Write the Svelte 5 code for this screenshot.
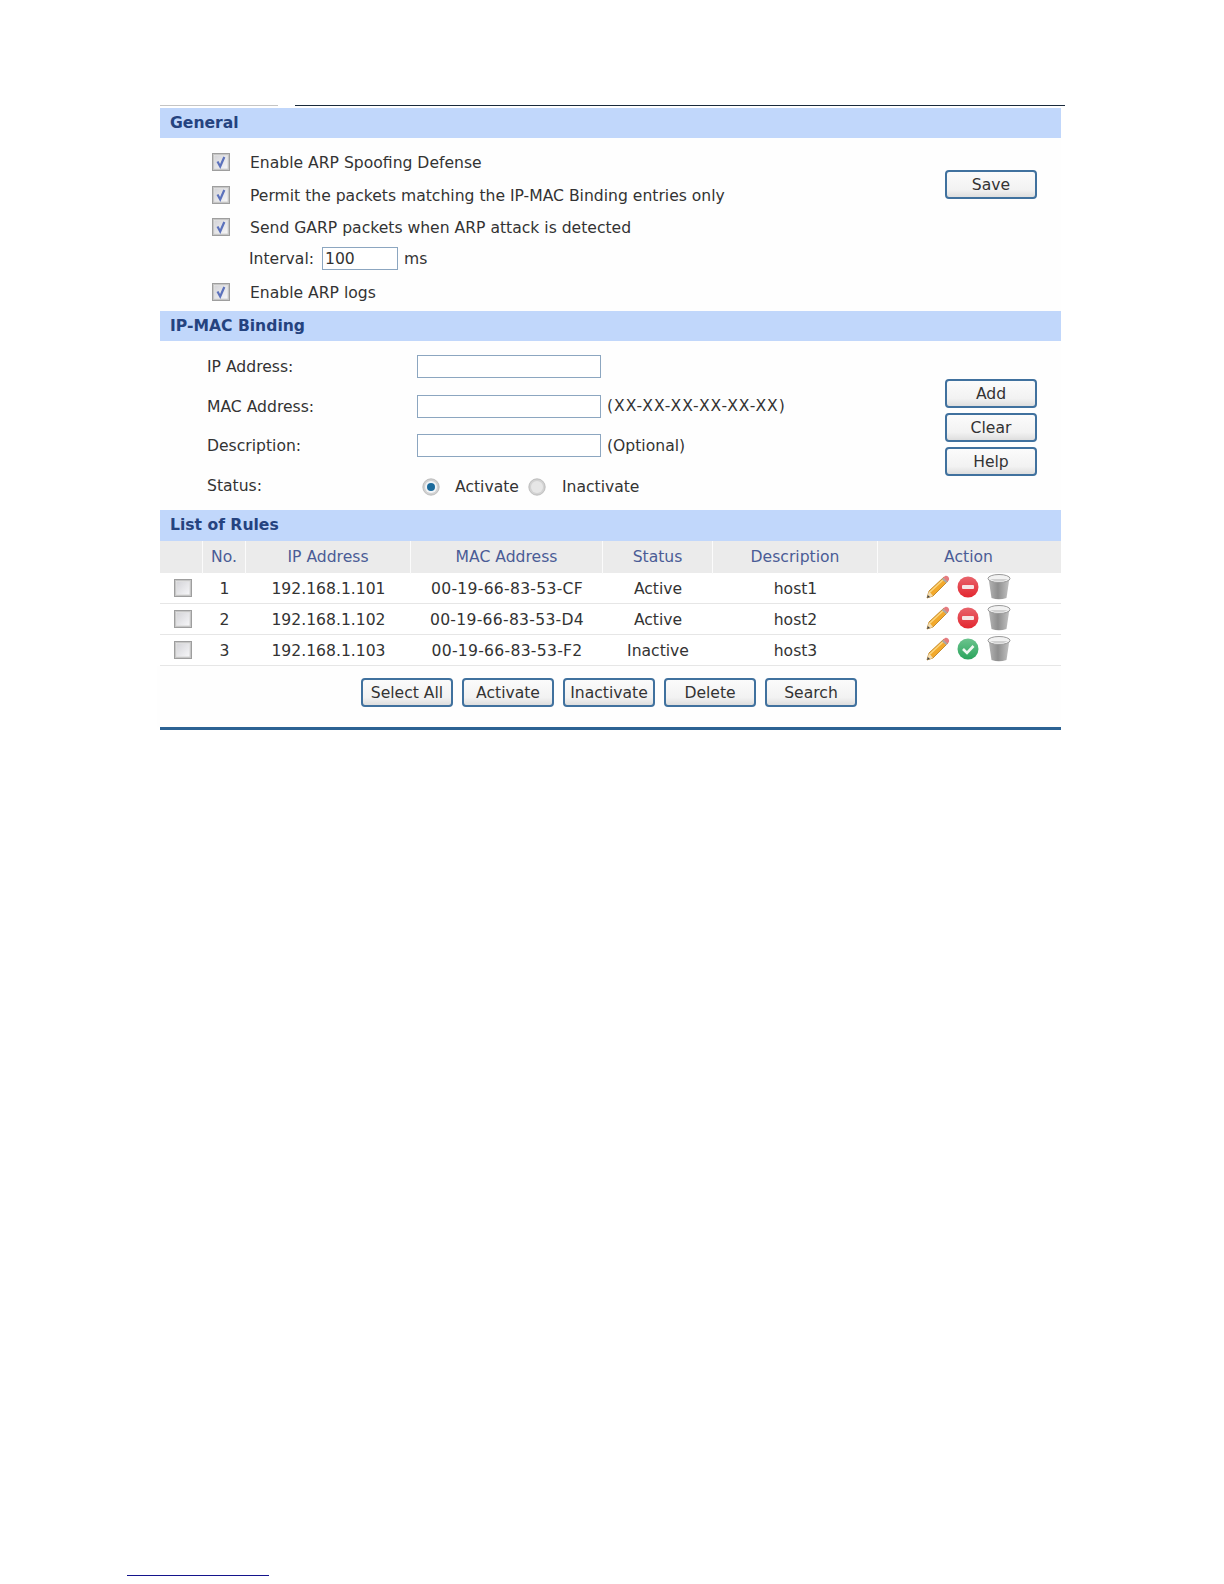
<script>
  const rules = [
    { no: 1, ip: '192.168.1.101', mac: '00-19-66-83-53-CF', status: 'Active', desc: 'host1', on: true },
    { no: 2, ip: '192.168.1.102', mac: '00-19-66-83-53-D4', status: 'Active', desc: 'host2', on: true },
    { no: 3, ip: '192.168.1.103', mac: '00-19-66-83-53-F2', status: 'Inactive', desc: 'host3', on: false }
  ];
  const general = [
    'Enable ARP Spoofing Defense',
    'Permit the packets matching the IP-MAC Binding entries only',
    'Send GARP packets when ARP attack is detected'
  ];
  const bottom = ['Select All', 'Activate', 'Inactivate', 'Delete', 'Search'];
</script>

{#snippet check(checked)}
  <svg class="box" width="18" height="18" viewBox="0 0 18 18">
    <defs>
      <linearGradient id="boxfill" x1="0" y1="0" x2="1" y2="1"><stop offset="0" stop-color="#d4d4d8"/><stop offset="1" stop-color="#f6f6f8"/></linearGradient>
    </defs>
    <rect x="0.5" y="0.5" width="17" height="17" fill="#c6c6c6" stroke="#9e9e9e"/>
    <rect x="2.5" y="2.5" width="13" height="13" fill="url(#boxfill)" stroke="#e8e8e8" stroke-width="0.6"/>
    {#if checked}
      <path d="M5.5 8.5 L8.2 13.5 L12.3 4" fill="none" stroke="#5c72bc" stroke-width="2.2"/>
    {/if}
  </svg>
{/snippet}

{#snippet radio(on)}
  <svg class="radio" width="18" height="18" viewBox="0 0 18 18">
    <circle cx="9" cy="9" r="8.2" fill="#d2d2d2" stroke="#b4b4b4" stroke-width="0.8"/>
    <circle cx="9" cy="9" r="6" fill={on ? '#f2f5f8' : '#e6e6e6'}/>
    {#if on}<circle cx="9" cy="9" r="4" fill="#1c6b9c"/>{/if}
  </svg>
{/snippet}

{#snippet pencil()}
  <svg width="24" height="24" viewBox="0 0 24 24">
    <path d="M1 23 L3 16 L18 2 L22 6 L7 21 Z" fill="#f2a92c" stroke="#b87a18" stroke-width="0.8"/>
    <path d="M4 17 L19 3" stroke="#fbd57c" stroke-width="1.6"/>
    <path d="M17 2.5 L19.5 0.8 Q21 0.5 22.5 2 Q23.5 3.5 23 5 L21.5 6.8 Z" fill="#e57c80"/>
    <path d="M16.5 3.5 L21 7.5" stroke="#a8a8a8" stroke-width="2"/>
    <path d="M1 23 L3 16 L7 21 Z" fill="#f3dcae"/>
    <path d="M1 23 L1.8 20 L4 22 Z" fill="#444"/>
  </svg>
{/snippet}

{#snippet statusIcon(on)}
  <svg width="22" height="22" viewBox="0 0 22 22">
    <defs>
      <linearGradient id="red" x1="0" y1="0" x2="0" y2="1"><stop offset="0" stop-color="#e8646c"/><stop offset="1" stop-color="#e3262f"/></linearGradient>
      <linearGradient id="green" x1="0" y1="0" x2="0" y2="1"><stop offset="0" stop-color="#6cc48e"/><stop offset="1" stop-color="#2aa45c"/></linearGradient>
    </defs>
    {#if on}
      <circle cx="11" cy="11" r="10.5" fill="url(#red)"/>
      <rect x="5" y="9" width="12" height="4" rx="1" fill="#f6e6e6"/>
    {:else}
      <circle cx="11" cy="11" r="10.5" fill="url(#green)"/>
      <path d="M6 11 L10 15 L16.5 8" fill="none" stroke="#f0f8f2" stroke-width="2.6"/>
    {/if}
  </svg>
{/snippet}

{#snippet trash()}
  <svg width="24" height="26" viewBox="0 0 24 26">
    <defs>
      <linearGradient id="bin" x1="0" y1="0" x2="1" y2="0"><stop offset="0" stop-color="#b5b5b5"/><stop offset="0.45" stop-color="#8e8e8e"/><stop offset="1" stop-color="#c4c4c4"/></linearGradient>
    </defs>
    <path d="M1.5 4 L4.5 24 Q12 26.5 19.5 24 L22.5 4 Z" fill="url(#bin)"/>
    <ellipse cx="12" cy="4.5" rx="11" ry="4" fill="#f2f2f2" stroke="#9a9a9a"/>
    <path d="M3 5 Q12 10 21 5" fill="#d0d0d0"/>
  </svg>
{/snippet}

<div class="page">
  <div class="topline">
    <span class="grey"></span>
    <span class="dark"></span>
  </div>

  <main class="panel">
    <h2>General</h2>
    <section class="general">
      <div class="rows">
        {#each general as label}
          <div class="crow">{@render check(true)}<span class="ctext">{label}</span></div>
        {/each}
        <div class="interval">
          <span>Interval:</span>
          <input class="short" value="100" />
          <span>ms</span>
        </div>
        <div class="crow logs">{@render check(true)}<span class="ctext">Enable ARP logs</span></div>
      </div>
      <div class="side save"><button>Save</button></div>
    </section>

    <h2>IP-MAC Binding</h2>
    <section class="binding">
      <div class="form">
        <label for="ip">IP Address:</label>
        <div class="field"><input id="ip" /></div>
        <label for="mac">MAC Address:</label>
        <div class="field"><input id="mac" /><span class="wide">(XX-XX-XX-XX-XX-XX)</span></div>
        <label for="desc">Description:</label>
        <div class="field"><input id="desc" /><span>(Optional)</span></div>
        <span class="lbl">Status:</span>
        <div class="field status">
          {@render radio(true)}<span class="r1">Activate</span>
          {@render radio(false)}<span class="r2">Inactivate</span>
        </div>
      </div>
      <div class="side stack">
        <button>Add</button>
        <button>Clear</button>
        <button>Help</button>
      </div>
    </section>

    <h2 class="tall">List of Rules</h2>
    <div class="table">
      <div class="row head">
        <div></div><div>No.</div><div>IP Address</div><div>MAC Address</div><div>Status</div><div>Description</div><div>Action</div>
      </div>
      {#each rules as r}
        <div class="row">
          <div class="cb">{@render check(false)}</div>
          <div>{r.no}</div>
          <div>{r.ip}</div>
          <div class="mac">{r.mac}</div>
          <div>{r.status}</div>
          <div>{r.desc}</div>
          <div class="icons">
            {@render pencil()}
            {@render statusIcon(r.on)}
            {@render trash()}
          </div>
        </div>
      {/each}
    </div>
    <div class="actions">
      {#each bottom as b}<button>{b}</button>{/each}
    </div>
    <div class="rule"></div>
  </main>

  <div class="footnote"></div>
</div>

<style>
  :global(body) {
    margin: 0;
    background: #fff;
  }
  .page {
    height: 1584px;
    box-sizing: border-box;
    padding: 105px 0 8px;
    display: flex;
    flex-direction: column;
    font: 15.6px/20px "DejaVu Sans", Verdana, sans-serif;
    color: #333;
    overflow: hidden;
  }
  .topline {
    display: flex;
    margin-left: 160px;
    height: 1px;
    gap: 17px;
  }
  .grey { width: 118px; background: #c4c4c4; }
  .dark { width: 770px; background: #1a2a3c; }
  .panel {
    width: 901px;
    margin: 2px 0 0 160px;
  }
  h2 {
    margin: 0;
    height: 30px;
    padding-left: 10px;
    font: bold 15.6px/30px "DejaVu Sans", Verdana, sans-serif;
    color: #25437f;
    background: #c1d7fb;
  }
  h2.tall { height: 31px; line-height: 31px; }
  section {
    display: flex;
    justify-content: space-between;
    background: #fefefe;
  }
  .general {
    height: 173px;
  }
  .rows {
    padding: 8px 0 0 52px;
  }
  .crow {
    display: flex;
    align-items: center;
    gap: 20px;
    height: 32.5px;
  }
  .ctext { padding-top: 2px; }
  .crow.logs { margin-top: 2px; }
  .box { display: block; flex: none; }
  .interval {
    display: flex;
    align-items: center;
    height: 30px;
    margin-left: 37px;
  }
  input {
    box-sizing: border-box;
    width: 184px;
    height: 23px;
    padding: 0 2px;
    border: 1px solid #8ca6c0;
    background: #fff;
    font: 15.6px "DejaVu Sans", Verdana, sans-serif;
    color: #333;
    outline: none;
  }
  .short {
    width: 76px;
    margin: 0 6px 0 8px;
  }
  .side { padding-right: 24px; }
  .save { padding-top: 32px; }
  .stack {
    display: flex;
    flex-direction: column;
    gap: 5px;
    padding-top: 38px;
  }
  button {
    box-sizing: border-box;
    width: 92px;
    height: 29px;
    padding: 0;
    border: 2px solid #40719e;
    border-radius: 4px;
    background: linear-gradient(#fbfbfb, #f2f2f2 70%, #dedede);
    font: 15.6px/22px "DejaVu Sans", Verdana, sans-serif;
    color: #333;
  }
  .binding { height: 169px; }
  .form {
    display: grid;
    grid-template-columns: 210px auto;
    grid-auto-rows: 39.5px;
    align-items: center;
    padding: 6px 0 0 47px;
  }
  label { padding-top: 1px; }
  .lbl { margin-top: 2px; }
  .field {
    display: flex;
    align-items: center;
    gap: 6px;
  }
  .wide { letter-spacing: 0.95px; }
  .status { padding: 3px 0 0 5px; gap: 0; }
  .r1 { margin: 0 9px 0 15px; }
  .r2 { margin-left: 16px; }
  .radio { display: block; flex: none; }
  .table { background: #fff; }
  .row {
    display: grid;
    grid-template-columns: 43px 43px 165px 192px 110px 165px 183px;
    height: 31px;
    padding-top: 2px;
    align-items: center;
    text-align: center;
    border-bottom: 1px solid #e6e6e6;
    box-sizing: border-box;
  }
  .head {
    height: 32px;
    padding-top: 0;
    background: #ebebeb;
    color: #4a5c96;
    border-bottom: 0;
    align-items: stretch;
  }
  .head div {
    line-height: 33px;
    border-right: 1px solid #fbfbfb;
  }
  .head div:last-child { border-right: 0; padding-right: 2px; }
  .mac { letter-spacing: 0.28px; }
  .cb { display: flex; padding-left: 14px; margin-top: -2px; }
  .icons {
    display: flex;
    align-items: center;
    justify-content: flex-start;
    gap: 7px;
    margin-top: -4px;
    padding-left: 48px;
  }
  .icons svg { display: block; flex: none; }
  .icons svg:last-child { margin-left: 1px; }
  .actions {
    display: flex;
    justify-content: center;
    gap: 9px;
    padding: 12px 0 20px;
    margin-left: -3px;
    background: #fefefe;
  }
  .rule {
    height: 3px;
    background: #2c6293;
  }
  .footnote {
    width: 142px;
    height: 1px;
    margin: auto 0 0 127px;
    background: #14148c;
  }
</style>
